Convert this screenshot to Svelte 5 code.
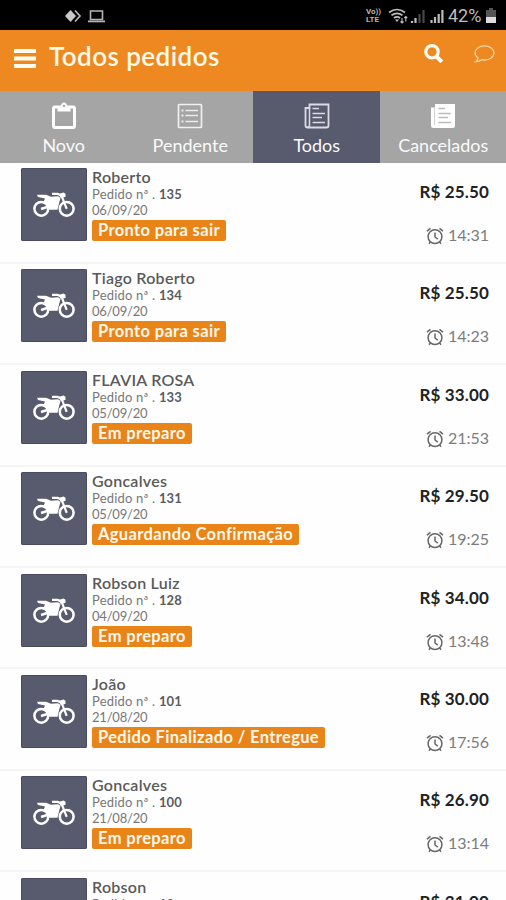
<script lang="ts">
	interface Order {
		name: string;
		number: string;
		date: string;
		status: string;
		price: string;
		time: string;
	}

	interface Tab {
		id: string;
		label: string;
	}

	const tabs: Tab[] = [
		{ id: 'novo', label: 'Novo' },
		{ id: 'pendente', label: 'Pendente' },
		{ id: 'todos', label: 'Todos' },
		{ id: 'cancelados', label: 'Cancelados' }
	];

	const orders: Order[] = [
		{ name: 'Roberto', number: '135', date: '06/09/20', status: 'Pronto para sair', price: '25.50', time: '14:31' },
		{ name: 'Tiago Roberto', number: '134', date: '06/09/20', status: 'Pronto para sair', price: '25.50', time: '14:23' },
		{ name: 'FLAVIA ROSA', number: '133', date: '05/09/20', status: 'Em preparo', price: '33.00', time: '21:53' },
		{ name: 'Goncalves', number: '131', date: '05/09/20', status: 'Aguardando Confirmação', price: '29.50', time: '19:25' },
		{ name: 'Robson Luiz', number: '128', date: '04/09/20', status: 'Em preparo', price: '34.00', time: '13:48' },
		{ name: 'João', number: '101', date: '21/08/20', status: 'Pedido Finalizado / Entregue', price: '30.00', time: '17:56' },
		{ name: 'Goncalves', number: '100', date: '21/08/20', status: 'Em preparo', price: '26.90', time: '13:14' },
		{ name: 'Robson', number: '13', date: '', status: '', price: '31.00', time: '' }
	];

	let active = $state('todos');
</script>

<div class="screen">
	<div class="statusbar">
		<svg width="42" height="16" viewBox="0 0 42 16">
			<path d="M6.500 2 12 8l-5.500 6L1 8z" fill="#c9c9c9" />
			<path d="m11 2.500 5 5.500-5 5.500" fill="none" stroke="#b5b5b5" stroke-width="1.700" />
			<path d="M26.500 3h12v8.500h-12z" fill="none" stroke="#b5b5b5" stroke-width="1.600" />
			<path d="M24 12.500h17v1.800H24z" fill="#b5b5b5" />
		</svg>
		<div class="statusbar__right">
			<span class="volte"><span>Vo))</span><span>LTE</span></span>
			<svg width="56" height="18" viewBox="0 0 56 18" fill="none" stroke="#bcbcbc">
				<path d="M1 5.500q8-6 16 0M3.500 8.300q5.500-4 11 0M6 11q3-2.400 6 0" stroke-width="1.700" />
				<path d="m9 15-2-2.500h4z" fill="#bcbcbc" stroke="none" />
				<path d="M14 11v5m-1.500-1.500L14 16l1.500-1.500M17.800 14.500v-5m-1.500 1.500 1.500-1.500 1.500 1.500" stroke-width="1.100" />
				<path d="M24 16v-2M27.500 16v-5" stroke-width="2.200" />
				<path d="M31.500 16V7M35.500 16V3" stroke="#484848" stroke-width="2.200" />
				<path d="M43.500 16v-3M47 16v-6M50.700 16V7M54.400 16V3" stroke-width="2.200" />
			</svg>
			<span class="battery-text">42%</span>
			<svg width="10" height="15" viewBox="0 0 10 15">
				<path d="M3 0h4v2h3v13H0V2h3z" fill="#555" />
				<path d="M0 9h10v6H0z" fill="#ddd" />
			</svg>
		</div>
	</div>

	<header class="appbar">
		<button class="icon-btn" aria-label="Menu">
			<svg width="22" height="20" viewBox="0 0 22 20" fill="#fffdf2">
				<path d="M0 0h22v4H0zM0 7.500h22v4H0zM0 15h22v4H0z" />
			</svg>
		</button>
		<h1>Todos pedidos</h1>
		<button class="icon-btn search" aria-label="Buscar">
			<svg width="20" height="20" viewBox="0 0 20 20" fill="none" stroke="#fffdf2">
				<circle cx="8" cy="7.800" r="6.200" stroke-width="3.200" />
				<path d="m12.500 12.500 5.300 5.300" stroke-width="4" />
			</svg>
		</button>
		<button class="icon-btn chat" aria-label="Mensagens">
			<svg width="21" height="18" viewBox="0 0 21 18" fill="none" stroke="#fbd5a3" stroke-width="1.300">
				<path d="M4 12.800C2 11.600 1 10 1 8c0-4 4.200-7.200 9.500-7.200S20 4 20 8s-4.200 7-9.500 7q-1.500 0-2.800-.3Q5.500 16.500 2 16.500q2-1.400 2-3.700z" />
			</svg>
		</button>
	</header>

	<nav class="tabs">
		{#each tabs as tab (tab.id)}
			<button class="tab" class:tab--active={active === tab.id} onclick={() => (active = tab.id)}>
				<svg width="26" height="28" viewBox="0 0 26 28" fill="none">
					{#if tab.id === 'novo'}
						<rect x="2.500" y="5" width="21" height="20.500" rx="1.500" stroke="#fff" stroke-width="3" />
						<path d="M6.500 4h3.200Q10.500.5 13 .5T16.300 4h3.200v5.500h-13z" fill="#fff" />
						<circle cx="13" cy="4" r="1.200" fill="#a5a5a5" />
					{:else if tab.id === 'pendente'}
						<rect x="1.500" y="2.500" width="23" height="23" rx="1" stroke="#f0f0f0" stroke-width="1.700" />
						<path d="M8.500 8.500H21M8.500 13.500H21M8.500 19.500H21" stroke="#ececec" stroke-width="1.600" />
						<path d="M4.500 8.500h2M4.500 13.500h2M4.500 19.500h2" stroke="#ececec" stroke-width="2" />
					{:else if tab.id === 'todos'}
						<path d="M5.500 2.500h19v21q0 2-2 2H3.500q-2 0-2-2V6h4z" stroke="#dcdce4" stroke-width="1.800" />
						<path d="M5.500 6v17q0 2-2 2" stroke="#dcdce4" stroke-width="1.500" />
						<path d="M8.500 6.500H15M8.500 11.500H21M8.500 15.500H18M8.500 20.500H21" stroke="#dcdce4" stroke-width="1.700" />
					{:else}
						<path d="M5 2h20v21.500q0 2.500-2.500 2.500h-19Q1 26 1 23.500V5.500h4z" fill="#fff" />
						<path d="M4.500 6v17" stroke="#c4c4c4" stroke-width=".8" />
						<path d="M8.500 6.500H15M8.500 11.500H21M8.500 15.500H18M8.500 20.500H21" stroke="#bcbcbc" stroke-width="1.300" />
					{/if}
				</svg>
				<span>{tab.label}</span>
			</button>
		{/each}
	</nav>

	<main class="orders">
		{#each orders as order}
			<article class="order">
				<div class="order__thumb">
					<svg width="42" height="27" viewBox="0 0 42 27" fill="none" stroke="#fff">
						<circle cx="8.300" cy="17.800" r="6.900" stroke-width="2.500" />
						<circle cx="33.700" cy="17.800" r="6.900" stroke-width="2.500" />
						<path d="M4 3.800h9L18 5.700l7-.4 2.500 1.600-1 3.600-2 8.200H14.500q-.3-4.700-4.500-7L12 7.500 5 6z" fill="#fff" stroke="none" />
						<path d="m8 18 7-2.200" stroke-width="2.600" />
						<path d="M19 2.900h5.500L28.500 4.500l5.200 13.300" stroke-width="2.200" />
						<path d="m25.500 3 5-1.500 2 1.300v3.200l-5 .8z" fill="#fff" stroke="none" />
					</svg>
				</div>
				<div class="order__info">
					<h2>{order.name}</h2>
					<p>Pedido nª . <b>{order.number}</b></p>
					{#if order.date}
						<p class="order__date">{order.date}</p>
					{/if}
					{#if order.status}
						<span class="order__status">{order.status}</span>
					{/if}
				</div>
				<div class="order__side">
					<strong>R$ {order.price}</strong>
					{#if order.time}
						<div class="order__time">
							<svg width="18" height="18" viewBox="0 0 18 18" fill="none" stroke="#666" stroke-width="1.500">
								<circle cx="9" cy="9.700" r="6.900" />
								<path d="M9 5.500V10l2.800 2.200M1 4.200l3.500-2.900M17 4.200l-3.500-2.900M4.500 14.800l-1.500 2M13.500 14.800l1.500 2" />
							</svg>
							<span>{order.time}</span>
						</div>
					{/if}
				</div>
			</article>
		{/each}
	</main>
</div>

<style>
	:global(body) {
		background: #fefefe;
	}

	.screen {
		display: flex;
		flex-direction: column;
		width: 506px;
		height: 900px;
		overflow: hidden;
		background: #fefefe;
		font-family: Lato, 'Open Sans', sans-serif;
	}

	button {
		border: 0;
		padding: 0;
		background: none;
		font: inherit;
		color: inherit;
	}

	/* Status bar */
	.statusbar {
		flex: none;
		display: flex;
		align-items: center;
		justify-content: space-between;
		height: 30px;
		padding: 1px 10px 0 64px;
		box-sizing: border-box;
		background: #000;
	}

	.statusbar__right {
		display: flex;
		align-items: center;
	}

	.volte {
		display: flex;
		flex-direction: column;
		width: 22px;
		font: 700 8px/8px Roboto, sans-serif;
		color: #b5b5b5;
	}

	.battery-text {
		width: 38px;
		margin-left: 4px;
		font: 400 18px/20px Roboto, sans-serif;
		color: #bdbdbd;
	}

	/* App bar */
	.appbar {
		flex: none;
		display: flex;
		align-items: flex-start;
		height: 60.500px;
		padding: 0 11px 0 14px;
		box-sizing: border-box;
		background: #ee8922;
		color: #fffbe8;
	}

	.icon-btn {
		display: flex;
		margin-top: 19px;
	}

	.appbar h1 {
		flex: 1;
		margin: 10px 0 0 13px;
		font-size: 26px;
		line-height: 32px;
		font-weight: 600;
		letter-spacing: 0.45px;
	}

	.search {
		margin-top: 14px;
		margin-right: 30px;
	}

	.chat {
		margin-top: 15px;
	}

	/* Tabs */
	.tabs {
		flex: none;
		display: grid;
		grid-template-columns: repeat(4, 1fr);
		height: 72px;
		background: #a5a5a5;
	}

	.tab {
		display: flex;
		flex-direction: column;
		align-items: center;
		padding: 11px 0 0 1px;
		font-size: 18px;
		line-height: 24px;
		color: #fafafa;
	}

	.tab span {
		margin-top: 3px;
	}

	.tab--active {
		background: #585a6e;
	}

	/* Order rows */
	.order {
		display: flex;
		height: 101.400px;
		padding: 5.500px 17px 0 21px;
		box-sizing: border-box;
		border-bottom: 2px solid #f5f5f5;
	}

	.order__thumb {
		display: flex;
		align-items: center;
		justify-content: center;
		flex: none;
		width: 66px;
		height: 73px;
		border-radius: 2px;
		background: #585a6e;
		box-shadow: inset 0 0 0 1px #4a4b62;
	}

	.order__info {
		flex: 1;
		margin: -1px 0 0 5px;
		color: #777;
	}

	.order__info h2 {
		margin: 0;
		font-size: 16px;
		line-height: 20px;
		font-weight: 600;
		letter-spacing: 0.25px;
		color: #5a5a5a;
	}

	.order__info p {
		margin: 0;
		font-size: 13px;
		line-height: 15px;
		letter-spacing: 0.2px;
	}

	.order__info .order__date {
		line-height: 16px;
		letter-spacing: -0.2px;
	}

	.order__info b {
		color: #5c5c5c;
	}

	.order__status {
		display: block;
		width: fit-content;
		height: 21px;
		margin-top: 2px;
		padding: 0 6px;
		border-radius: 2px;
		background: #e98419;
		font-size: 16.500px;
		line-height: 20px;
		font-weight: 700;
		letter-spacing: 0.35px;
		color: #fff8ea;
	}

	.order__side {
		display: flex;
		flex-direction: column;
		align-items: flex-end;
		padding-top: 13px;
	}

	.order__side strong {
		font-size: 17px;
		line-height: 22px;
		letter-spacing: 0.15px;
		color: #222;
	}

	.order__time {
		display: flex;
		align-items: flex-end;
		gap: 4px;
		margin-top: 21px;
		font-size: 16px;
		line-height: 22px;
		color: #7c7c7c;
	}

	.order__time svg {
		margin-bottom: 1px;
	}
</style>
